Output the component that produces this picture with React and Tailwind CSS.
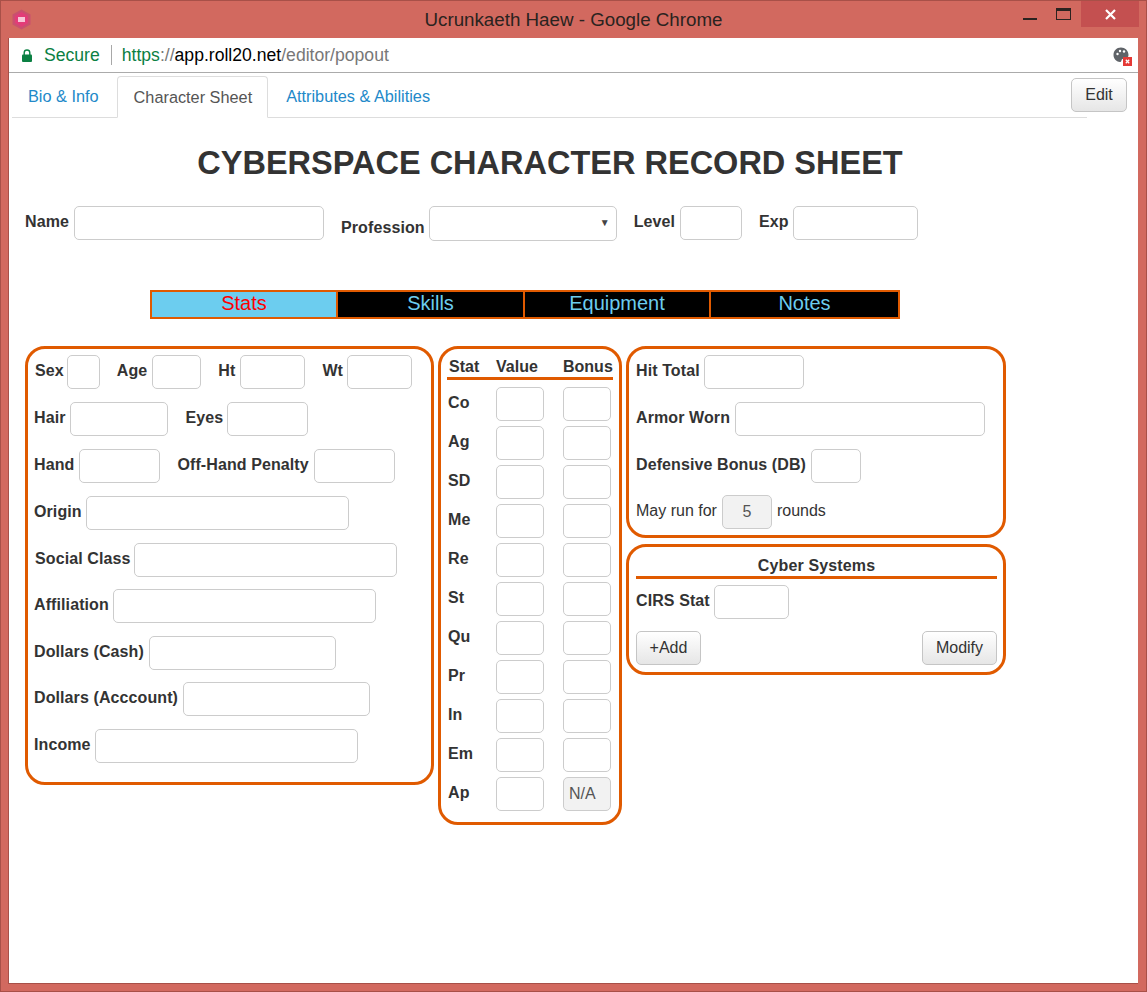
import React from 'react';

const ORANGE = 'border-[#e05a00]';
const BTN = 'h-[34px] rounded-[5px] border border-[#c5c5c5] bg-gradient-to-b from-[#fff] to-[#e6e6e6] text-[#333]';

function Field({ width, value, disabled, className = '' }) {
    return (
        <div
            className={`h-[34px] shrink-0 rounded-[5px] border border-[#ccc] text-[16px] flex items-center justify-center text-[#555] ${disabled ? 'bg-[#f2f2f2]' : 'bg-white'} ${className}`}
            style={{ width }}
        >
            {value}
        </div>
    );
}

function Label({ children, className = '' }) {
    return <span className={`font-bold tracking-[0.1px] whitespace-nowrap ${className}`}>{children}</span>;
}

function Row({ children, className = '' }) {
    return <div className={`flex items-center h-[34px] gap-[5px] ${className}`}>{children}</div>;
}

const LEFT_ROWS = [
    ['Origin', 263, '', '-mr-px'],
    ['Social Class', 263, 'ml-px', '-mr-px'],
    ['Affiliation', 263, '-mt-px', '-mr-px'],
    ['Dollars (Cash)', 187, '', ''],
    ['Dollars (Acccount)', 187, '-mt-px', ''],
    ['Income', 263, '', '-mr-px'],
];

const STATS = ['Co', 'Ag', 'SD', 'Me', 'Re', 'St', 'Qu', 'Pr', 'In', 'Em', 'Ap'];

const NAV_TABS = [
    ['Stats', 'w-[186px] border-r-2 bg-[#6ccdef] text-[#ff0000]'],
    ['Skills', 'w-[187px] border-r-2 text-[#6ccdef]'],
    ['Equipment', 'w-[186px] border-r-2 text-[#6ccdef]'],
    ['Notes', 'flex-1 text-[#6ccdef]'],
];

function WindowFrame() {
    return (
        <div className="h-[37px] flex items-start relative">
            <svg className="mt-[8px] ml-[10px]" width="21" height="21" viewBox="0 0 21 21">
                <polygon points="10.5,0.5 19.5,5.5 19.5,15.5 10.5,20.5 1.5,15.5 1.5,5.5" fill="#c9506f" />
                <polygon points="10.5,3 17,7 17,14 10.5,18 4,14 4,7" fill="#e23c78" />
                <rect x="7" y="8" width="7" height="5" fill="#f7c6d8" />
            </svg>
            <div className="absolute left-0 right-0 top-[7px] text-center text-[18.75px] leading-[24px] text-[#2a2320]">
                Ucrunkaeth Haew - Google Chrome
            </div>
            <div className="ml-auto mr-[7px] flex items-start">
                <div className="w-[14px] h-[2px] bg-[#2b2320] mt-[17px] mr-[19px]" />
                <div className="w-[15px] h-[12px] mt-[7px] mr-[10px] border border-[#2b2320] border-t-[3px]" />
                <div className="w-[58px] h-[26px] bg-[#c45050] flex items-center justify-center">
                    <svg width="11" height="11" viewBox="0 0 11 11" stroke="white" strokeWidth="2.2">
                        <path d="M1 1 L10 10 M10 1 L1 10" />
                    </svg>
                </div>
            </div>
        </div>
    );
}

function AddressBar() {
    return (
        <div className="h-[35px] flex items-center border-b border-[#ababab] bg-white relative text-[17.6px]">
            <svg className="ml-[13px]" width="10" height="13" viewBox="0 0 10 13">
                <path d="M2.2 6V3.8a2.8 2.8 0 0 1 5.6 0V6" fill="none" stroke="#0b8043" strokeWidth="1.4" />
                <rect x="0" y="5.5" width="10" height="7.5" rx="1" fill="#0b8043" />
            </svg>
            <span className="ml-[12px] text-[#0b8043]">Secure</span>
            <div className="w-px h-[20px] bg-[#a8a8a8] ml-[11px]" />
            <span className="ml-[10px] whitespace-nowrap">
                <span className="text-[#0b8043]">https</span>
                <span className="text-[#777]">://</span>
                <span className="text-black">app.roll20.net</span>
                <span className="text-[#777]">/editor/popout</span>
            </span>
            <svg className="absolute left-[1104px] top-[9px]" width="19" height="19" viewBox="0 0 19 19">
                <path d="M8 0.5 C3.5 0.5 0.5 3.8 0.5 8 C0.5 12 3.8 15 7 15 C9 15 8 12.5 9.5 12 C11.5 11.2 15.5 12 15.5 8 C15.5 3.5 12 0.5 8 0.5 Z" fill="#5f6368" />
                <circle cx="4.5" cy="7" r="1.2" fill="white" />
                <circle cx="7" cy="4" r="1.2" fill="white" />
                <circle cx="11" cy="4.5" r="1.2" fill="white" />
                <rect x="10" y="10" width="9" height="9" fill="#e53935" />
                <path d="M12.8 12.8 L16.2 16.2 M16.2 12.8 L12.8 16.2" stroke="white" strokeWidth="1.3" />
            </svg>
        </div>
    );
}

function TabBar() {
    return (
        <div className="relative h-[45px] pt-[3px] pl-[3px] w-[1078px] text-[16.3px]">
            <div className="flex h-[42px] border-b border-[#ddd]">
                <div className="px-[16px] mr-[2px] flex items-center text-[#2289c9]">Bio &amp; Info</div>
                <div className="pl-[16px] pr-[15px] h-[42px] flex items-center bg-white border border-[#ddd] border-b-white rounded-t-[4px] text-[#555]">Character Sheet</div>
                <div className="px-[18px] flex items-center text-[#2289c9]">Attributes &amp; Abilities</div>
            </div>
            <button className={`absolute left-[1062px] top-[5px] w-[56px] text-[16px] ${BTN}`}>
                Edit
            </button>
        </div>
    );
}

function SheetHeader() {
    return (
        <>
            <h1 className="pt-[26px] h-[88px] w-[1082px] text-center text-[32.5px] leading-[38px] font-bold text-[#333]">
                CYBERSPACE CHARACTER RECORD SHEET
            </h1>
            <div className="flex items-start ml-[16px] h-[84px]">
                <Row><Label className="-mt-[2px]">Name</Label><Field width={250} /></Row>
                <div className="flex items-center h-[35px] ml-[17px] gap-[5px]">
                    <Label className="mt-[9px] -mr-px">Profession</Label>
                    <div className="relative w-[188px] h-[35px] rounded-[5px] border border-[#ccc] bg-white">
                        <span className="absolute right-[6px] top-[8px] text-[10px] text-[#444]">▼</span>
                    </div>
                </div>
                <Row className="ml-[17px]"><Label className="-mt-[3px]">Level</Label><Field width={62} /></Row>
                <Row className="ml-[17px]"><Label className="-mt-[3px] -mr-px">Exp</Label><Field width={125} /></Row>
            </div>
            <div className={`flex ml-[141px] w-[750px] h-[29px] border-2 ${ORANGE} text-[20px] bg-black`}>
                {NAV_TABS.map(([tab, cls]) => (
                    <div key={tab} className={`flex items-center justify-center pb-[4px] ${ORANGE} ${cls}`}>
                        {tab}
                    </div>
                ))}
            </div>
        </>
    );
}

function IdentityPanel() {
    return (
        <div className={`w-[409px] h-[439px] shrink-0 rounded-[20px] border-[3px] ${ORANGE} pt-[6px] pl-[6px] flex flex-col gap-[13px]`}>
            <Row className="ml-px">
                <Label className="-mt-[2px] -mr-[2px]">Sex</Label><Field width={33} />
                <Label className="-mt-[2px] ml-[12px]">Age</Label><Field width={49} />
                <Label className="-mt-[2px] ml-[12px]">Ht</Label><Field width={65} />
                <Label className="-mt-[2px] -mr-px ml-[12px]">Wt</Label><Field width={65} />
            </Row>
            <Row>
                <Label className="-mt-[2px] -mr-px">Hair</Label><Field width={98} />
                <Label className="-mt-[2px] -mr-px ml-[13px]">Eyes</Label><Field width={81} />
            </Row>
            <Row>
                <Label className="-mt-[2px]">Hand</Label><Field width={81} />
                <Label className="-mt-[2px] ml-[12px]">Off-Hand Penalty</Label><Field width={81} />
            </Row>
            {LEFT_ROWS.map(([label, width, rowCls, labelCls]) => (
                <Row key={label} className={rowCls}>
                    <Label className={`-mt-[2px] ${labelCls}`}>{label}</Label><Field width={width} />
                </Row>
            ))}
        </div>
    );
}

function StatsPanel() {
    return (
        <div className={`w-[184px] h-[479px] shrink-0 rounded-[20px] border-[3px] ${ORANGE} pt-[8px] px-[6px]`}>
            <div className={`flex h-[23px] border-b-[3px] ${ORANGE} font-bold leading-[20px]`}>
                <span className="w-[49px] pl-[2px]">Stat</span>
                <span className="w-[67px]">Value</span>
                <span>Bonus</span>
            </div>
            <div className="flex flex-col gap-[5px] mt-[7px]">
                {STATS.map((stat) => (
                    <div key={stat} className="flex items-center h-[34px] ml-px">
                        <Label className="w-[48px] shrink-0 -mt-[2px]">{stat}</Label>
                        <Field width={48} />
                        <Field
                            width={48}
                            className={`ml-[19px] ${stat === 'Ap' ? 'justify-start pl-[5px]' : ''}`}
                            value={stat === 'Ap' ? 'N/A' : null}
                            disabled={stat === 'Ap'}
                        />
                    </div>
                ))}
            </div>
        </div>
    );
}

function RightPanels() {
    return (
        <div className="flex flex-col gap-[6px] w-[380px] shrink-0">
            <div className={`h-[192px] rounded-[20px] border-[3px] ${ORANGE} pt-[6px] pl-[7px] flex flex-col gap-[13px]`}>
                <Row><Label className="-mt-[2px] -mr-px">Hit Total</Label><Field width={100} /></Row>
                <Row><Label className="-mt-[2px]">Armor Worn</Label><Field width={250} /></Row>
                <Row><Label className="-mt-[2px]">Defensive Bonus (DB)</Label><Field width={50} /></Row>
                <Row className="-mt-px">
                    <span className="-mt-[2px]">May run for</span>
                    <Field width={50} value="5" disabled />
                    <span className="-mt-[2px]">rounds</span>
                </Row>
            </div>
            <div className={`h-[131px] rounded-[20px] border-[3px] ${ORANGE} pt-[9px] px-[7px]`}>
                <div className={`h-[23px] w-[361px] border-b-[3px] ${ORANGE} text-center font-bold leading-[20px] tracking-[0.15px]`}>Cyber Systems</div>
                <Row className="mt-[6px]"><Label className="-mt-[2px] -mr-px">CIRS Stat</Label><Field width={75} /></Row>
                <div className="flex justify-between w-[361px] mt-[12px]">
                    <button className={`w-[65px] ${BTN}`}>+Add</button>
                    <button className={`w-[75px] ${BTN}`}>Modify</button>
                </div>
            </div>
        </div>
    );
}

export default function App() {
    return (
        <div className="w-[1147px] h-[992px] bg-[#d2695f] border border-[#a85048] overflow-hidden text-[16px] text-[#333] [font-family:'Liberation_Sans',Arial,sans-serif]">
            <WindowFrame />
            <div className="ml-[7px] h-[946px] w-[1130px] bg-white border-b border-l border-[#a85048]">
                <AddressBar />
                <TabBar />
                <SheetHeader />
                <div className="flex ml-[16px] mt-[27px] gap-[4px]">
                    <IdentityPanel />
                    <StatsPanel />
                    <RightPanels />
                </div>
            </div>
        </div>
    );
}
